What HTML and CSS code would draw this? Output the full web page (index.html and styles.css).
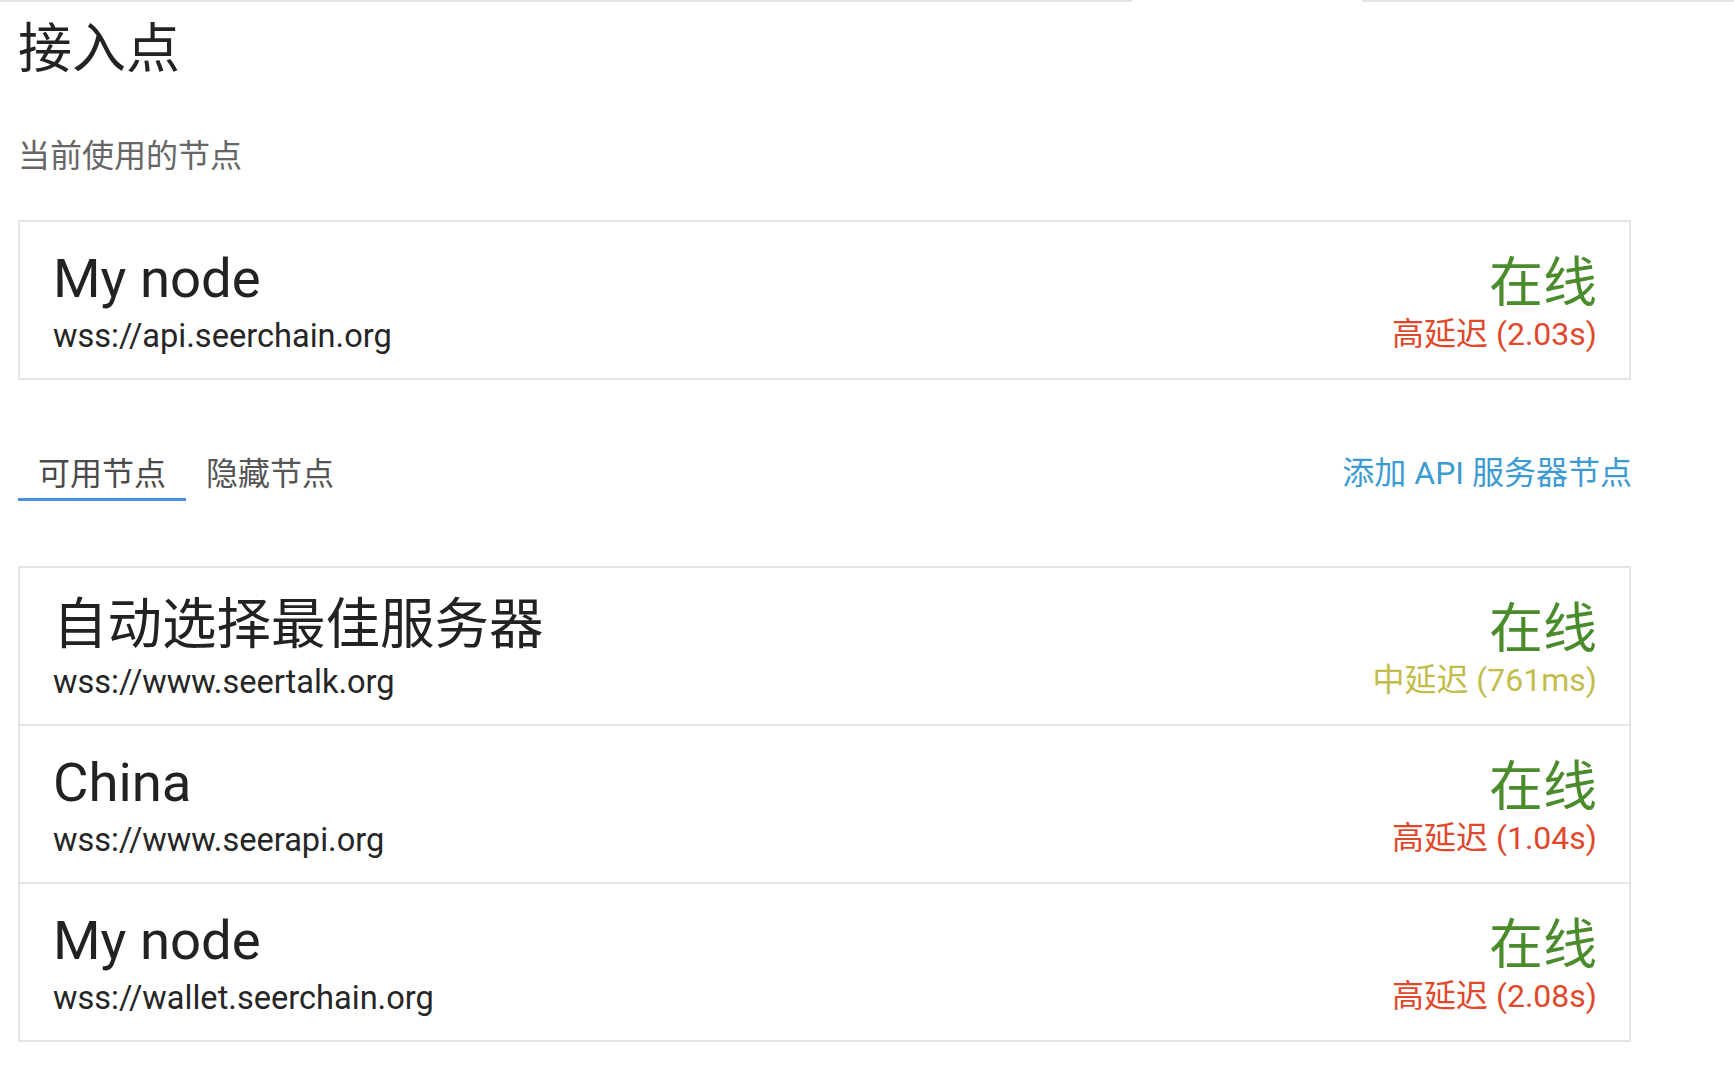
FILE: index.html
```html
<!DOCTYPE html>
<html lang="zh-CN">
<head>
<meta charset="utf-8">
<title>接入点</title>
<link rel="stylesheet" href="styles.css">
</head>
<body>
<div class="topbar">
  <div class="topbar-seg topbar-left"></div>
  <div class="topbar-gap"></div>
  <div class="topbar-seg topbar-right"></div>
</div>
<main class="page">
  <h1 class="page-title">接入点</h1>
  <p class="section-label">当前使用的节点</p>

  <section class="node-card">
    <div class="node-row">
      <div class="node-info">
        <div class="node-name">My node</div>
        <div class="node-url">wss://api.seerchain.org</div>
      </div>
      <div class="node-status">
        <div class="status-online">在线</div>
        <div class="latency latency-high">高延迟 (2.03s)</div>
      </div>
    </div>
  </section>

  <div class="tabs-bar">
    <div class="tabs">
      <div class="tab tab-active">可用节点</div>
      <div class="tab">隐藏节点</div>
    </div>
    <a class="add-link">添加 API 服务器节点</a>
  </div>

  <section class="node-card node-list">
    <div class="node-row">
      <div class="node-info">
        <div class="node-name">自动选择最佳服务器</div>
        <div class="node-url">wss://www.seertalk.org</div>
      </div>
      <div class="node-status">
        <div class="status-online">在线</div>
        <div class="latency latency-mid">中延迟 (761ms)</div>
      </div>
    </div>
    <div class="node-row">
      <div class="node-info">
        <div class="node-name">China</div>
        <div class="node-url">wss://www.seerapi.org</div>
      </div>
      <div class="node-status">
        <div class="status-online">在线</div>
        <div class="latency latency-high">高延迟 (1.04s)</div>
      </div>
    </div>
    <div class="node-row">
      <div class="node-info">
        <div class="node-name">My node</div>
        <div class="node-url">wss://wallet.seerchain.org</div>
      </div>
      <div class="node-status">
        <div class="status-online">在线</div>
        <div class="latency latency-high">高延迟 (2.08s)</div>
      </div>
    </div>
  </section>
</main>
</body>
</html>
```
FILE: styles.css
```css
* { box-sizing: border-box; }

html, body {
  margin: 0;
  padding: 0;
  background: #ffffff;
}

body {
  font-family: Roboto, "Noto Sans CJK SC", "Noto Sans", sans-serif;
  color: #222222;
}

.topbar {
  display: flex;
  height: 2px;
}
.topbar-seg { background: #e4e4e4; height: 2px; }
.topbar-left { width: 1132px; }
.topbar-gap { width: 230px; }
.topbar-right { flex: 1; }

.page {
  padding: 18px 103px 0 18px;
}

.page-title {
  margin: 0;
  font-size: 54px;
  font-weight: 400;
  line-height: 60px;
  color: #232323;
}

.section-label {
  margin: 56px 0 0;
  font-size: 32px;
  line-height: 40px;
  color: #666666;
}

.node-card {
  margin-top: 44px;
  border: 2px solid #e4e4e4;
}

.node-row {
  display: flex;
  justify-content: space-between;
  padding: 26px 32px 22px 33px;
  height: 156px;
}
.node-row + .node-row {
  border-top: 2px solid #e4e4e4;
  height: 158px;
}

.node-info {
  display: flex;
  flex-direction: column;
}

.node-name {
  font-size: 54.5px;
  line-height: 60px;
  color: #222222;
}

.node-url {
  margin-top: 8px;
  font-size: 32.6px;
  line-height: 40px;
  color: #262626;
}

.node-status {
  display: flex;
  flex-direction: column;
  align-items: flex-end;
  padding-top: 6px;
}

.status-online {
  font-size: 54px;
  line-height: 60px;
  color: #4a8b2c;
}

.latency {
  font-size: 32px;
  line-height: 40px;
}
.latency-high { color: #e0482c; }
.latency-mid { color: #c2bd4a; }

.tabs-bar {
  display: flex;
  justify-content: space-between;
  align-items: center;
  margin-top: 70px;
}

.tabs {
  display: flex;
}

.tab {
  padding: 4px 20px 4px;
  font-size: 32px;
  line-height: 40px;
  color: #555555;
  border-bottom: 3px solid transparent;
}
.tab-active {
  color: #4a4a4a;
  border-bottom-color: #4a90e2;
}

.add-link {
  font-size: 32px;
  line-height: 40px;
  color: #3d9bd2;
  cursor: pointer;
  margin-right: -1px;
  margin-bottom: 6px;
}

.node-list {
  margin-top: 65px;
}
```
